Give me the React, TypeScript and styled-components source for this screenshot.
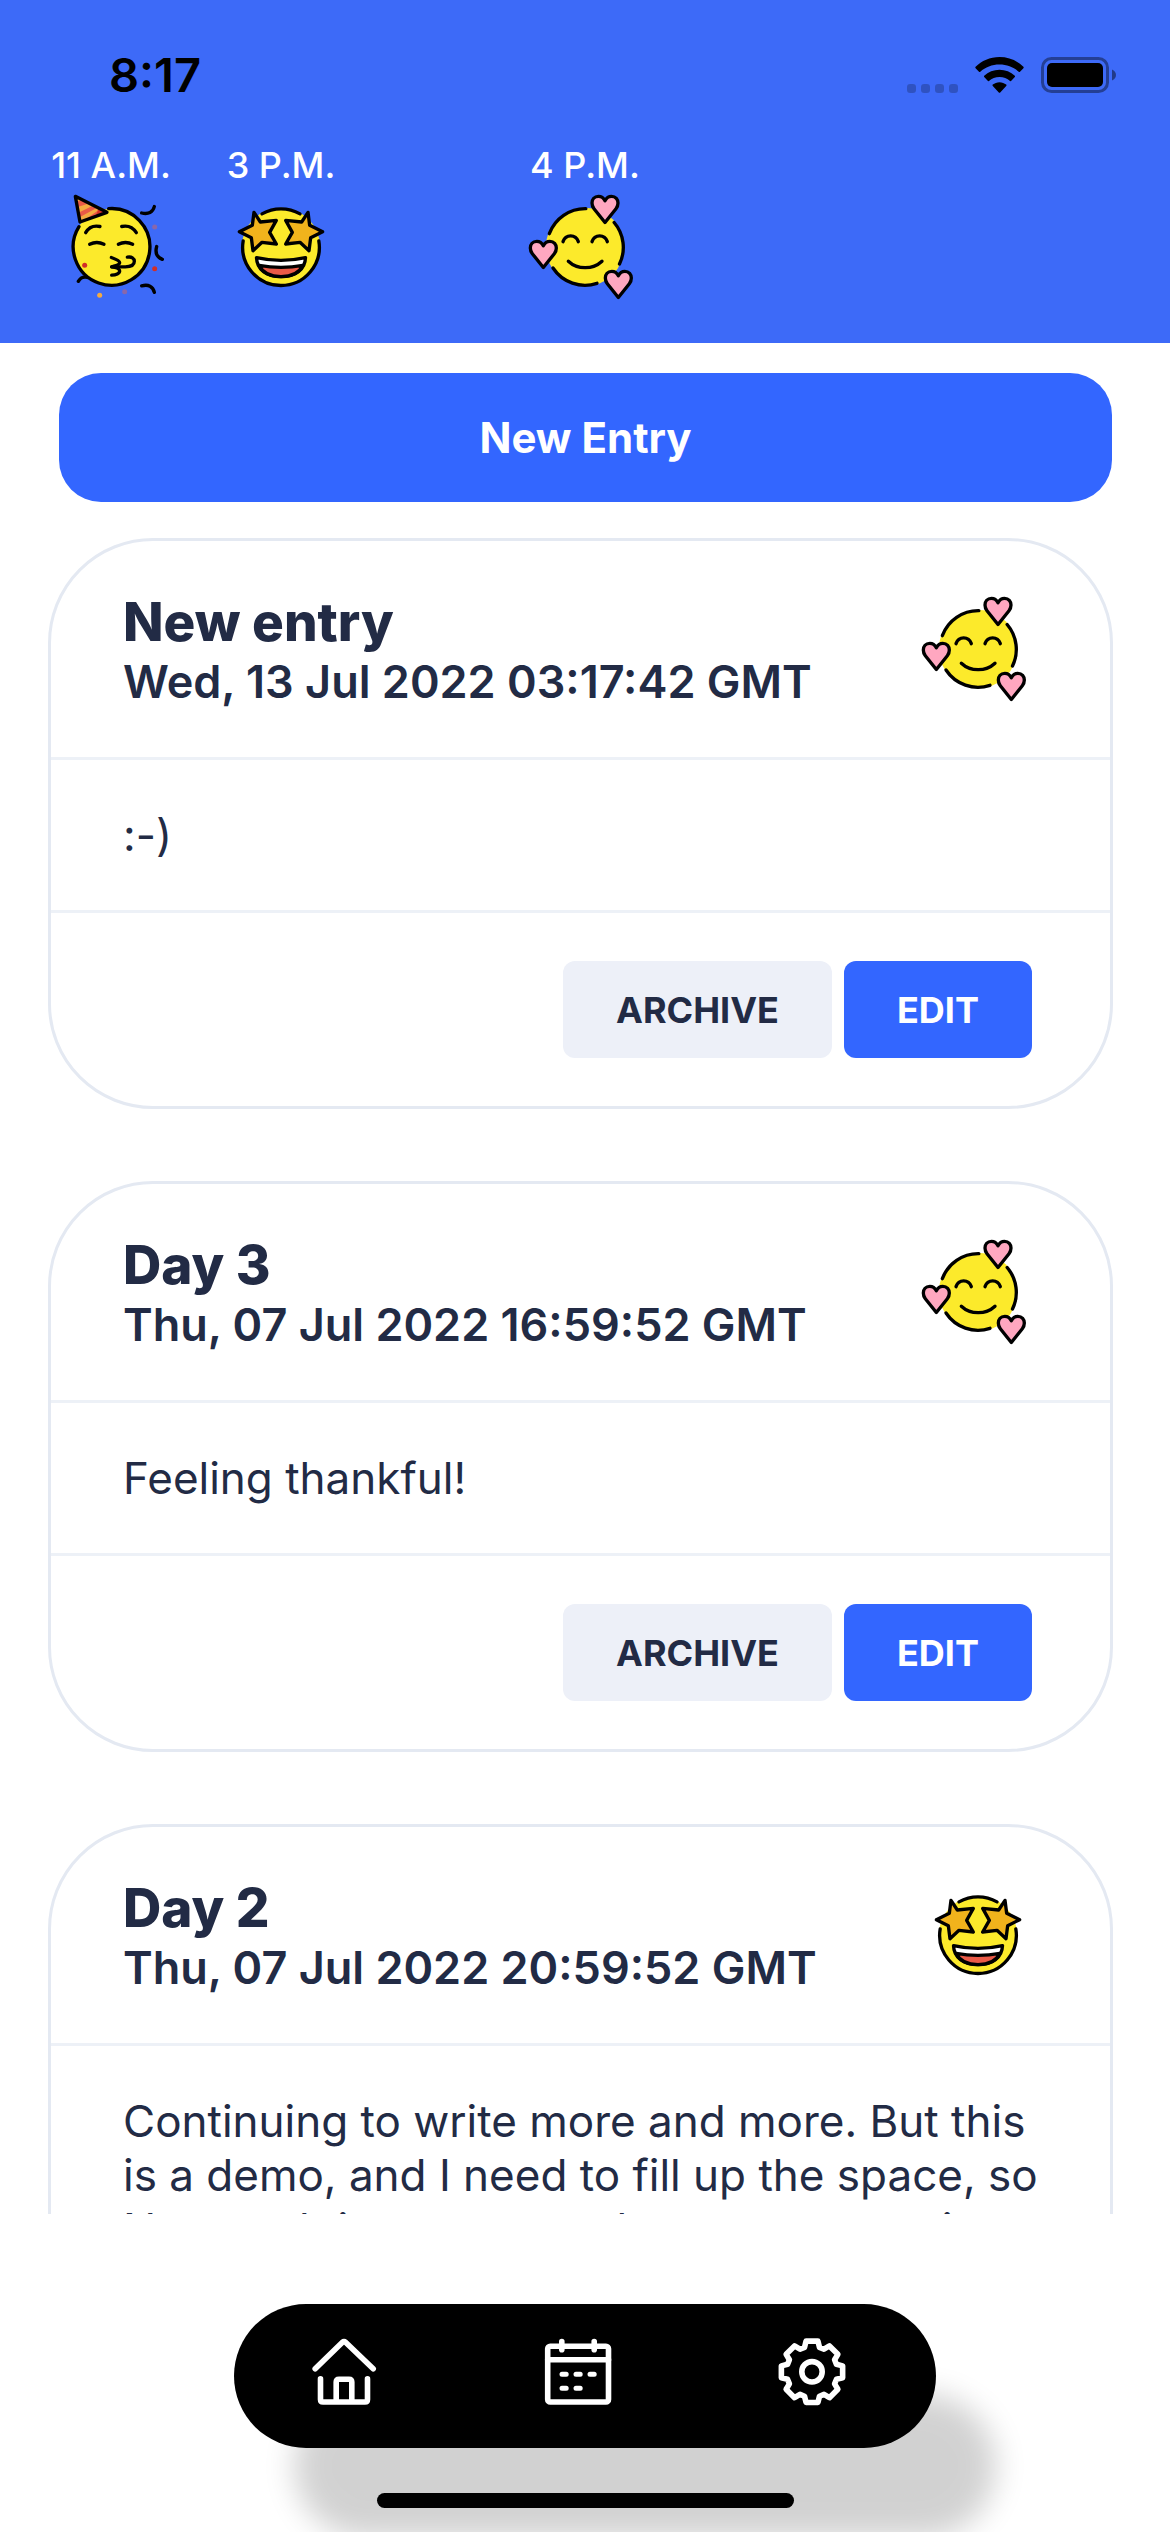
import React from "react";
import styled, { createGlobalStyle } from "styled-components";

const GlobalStyle = createGlobalStyle`
  *, *::before, *::after { box-sizing: border-box; }
  body {
    margin: 0;
    background: #ffffff;
    color: #222b45;
    font-family: Inter, Roboto, "Liberation Sans", sans-serif;
  }
  button { font-family: inherit; border: 0; cursor: pointer; }
  h2, p { margin: 0; }
`;

const Screen = styled.div`
  display: flex;
  flex-direction: column;
  height: 100vh;
  overflow: hidden;
`;

/* ---------- header ---------- */

const Header = styled.header`
  flex: none;
  padding-bottom: 36px;
  background: #3d6af8;
`;

const StatusBar = styled.div`
  display: flex;
  align-items: center;
  justify-content: space-between;
  height: 143px;
  padding: 6px 54px 0 109px;
  color: #000000;
`;

const Clock = styled.time`
  font-size: 47px;
  line-height: 54px;
  font-weight: 600;
`;

const StatusIcons = styled.div`
  display: flex;
  align-items: center;
  gap: 17px;
`;

const Moods = styled.div`
  display: grid;
  grid-template-columns: 1fr auto 1fr;
  padding: 0 50px;
`;

const MoodGroup = styled.div`
  display: flex;
  gap: 48px;
`;

const Mood = styled.div`
  display: flex;
  flex-direction: column;
  align-items: center;
  min-width: 122px;
`;

const MoodTime = styled.span`
  color: #ffffff;
  font-size: 36px;
  line-height: 44px;
  font-weight: 500;
  white-space: nowrap;
`;

/* ---------- journal ---------- */

const Toolbar = styled.div`
  flex: none;
  display: flex;
  padding: 30px 58px 36px 59px;
`;

const NewEntryButton = styled.button`
  flex: 1;
  padding: 36px;
  border-radius: 42px;
  background: #3366ff;
  color: #ffffff;
  font-size: 42px;
  line-height: 57px;
  font-weight: 700;
`;

const Journal = styled.main`
  flex: 1;
  min-height: 0;
  overflow: hidden;
  display: flex;
  flex-direction: column;
  gap: 72px;
  padding: 0 57px 0 48px;
`;

const Card = styled.article`
  flex: none;
  border: 3px solid #e4e9f2;
  border-radius: 105px;
`;

const CardHeader = styled.div`
  display: flex;
  justify-content: space-between;
  padding: 48px 72px;
`;

const CardTitle = styled.h2`
  font-size: 53px;
  line-height: 66px;
  font-weight: 800;
`;

const CardDate = styled.p`
  font-size: 45px;
  line-height: 54px;
  font-weight: 600;
`;

const CardBody = styled.p`
  padding: 48px 72px;
  border: solid #edf1f7;
  border-width: 3px 0;
  font-size: 44px;
  line-height: 54px;
  font-weight: 400;
  font-feature-settings: "calt" 0;
`;

const CardFooter = styled.div`
  display: flex;
  justify-content: flex-end;
  gap: 12px;
  padding: 48px 78px;
`;

const ActionButton = styled.button<{ $primary?: boolean }>`
  padding: 25px 53px 23px;
  border-radius: 12px;
  background: ${(p) => (p.$primary ? "#3366ff" : "#edf0f8")};
  color: ${(p) => (p.$primary ? "#ffffff" : "#222b45")};
  font-size: 36px;
  line-height: 49px;
  font-weight: 700;
`;

/* ---------- bottom navigation ---------- */

const Footer = styled.footer`
  flex: none;
  display: flex;
  flex-direction: column;
  align-items: center;
  gap: 45px;
  padding: 90px 0 24px;
`;

const TabBar = styled.nav`
  display: flex;
  width: 60%;
  height: 144px;
  border-radius: 72px;
  background: #000000;
  box-shadow: 60px 90px 30px rgba(0, 0, 0, 0.18);
`;

const Tab = styled.button`
  flex: 1;
  display: flex;
  align-items: center;
  justify-content: center;
  padding: 0 15px 8px 0;
  background: none;
`;

const HomeIndicator = styled.div`
  position: relative;
  width: 417px;
  height: 15px;
  border-radius: 8px;
  background: #000000;
`;

/* ---------- emoji ---------- */

const EmojiSvg = styled.svg`
  flex: none;
  display: block;
  width: 120px;
  height: 120px;
  fill: none;
  stroke: #000000;
  stroke-width: 2;
  stroke-linecap: round;
  stroke-linejoin: round;
`;

const HEART =
  "M48 8.2C47 6.3 45.6 5.6 44.1 5.6C41.6 5.6 40.2 7.5 40.2 9.6C40.2 11 40.6 12 41.4 13L48 21.3L54.6 13C55.4 12 55.8 11 55.8 9.6C55.8 7.5 54.4 5.6 51.9 5.6C50.4 5.6 49 6.3 48 8.2Z";

const Loved = () => (
  <EmojiSvg viewBox="0 0 72 72" role="img" aria-label="Loved">
    <circle cx="36" cy="36" r="23.5" fill="#fcea2b" stroke="none" />
    <path d="M36.5 13A23 23 0 0 0 14.6 28" />
    <path d="M53.5 21.3A23 23 0 0 1 56.7 46.2" />
    <path d="M16.8 48.6A23 23 0 0 0 43.2 57.8" />
    <path d="M22.8 32.8C24.4 28.2 30.4 28.2 32 32.8M40.2 32.8C41.8 28.2 47.8 28.2 49.4 32.8" />
    <path d="M26 44.5C31.5 49.7 40.7 49.7 46.2 44.5" />
    <path fill="#ffa7c0" d={HEART} />
    <path fill="#ffa7c0" d={HEART} transform="translate(-37 27)" />
    <path fill="#ffa7c0" d={HEART} transform="translate(8 45)" />
  </EmojiSvg>
);

const STAR =
  "M19.8 15.2L23.6 21L33.2 20L29.2 27.2L33.2 34.2L24.6 33.2L19.2 38.2L18.2 30.4L11 26.8L18.8 23Z";

const StarStruck = () => (
  <EmojiSvg viewBox="0 0 72 72" role="img" aria-label="Star-struck">
    <circle cx="36" cy="36" r="23.5" fill="#fcea2b" stroke="none" />
    <path d="M24.6 16.1A23 23 0 0 1 47.4 16.1" />
    <path d="M13.3 32.4A23 23 0 1 0 58.7 32.4" />
    <path fill="#f1b31c" d={STAR} />
    <path fill="#f1b31c" d={STAR} transform="translate(72 0) scale(-1 1)" />
    <path
      fill="#ffffff"
      d="M21.3 42.4C31 44.6 41 44.6 50.7 42.4C50.5 49.5 44.6 53.8 36 53.8C27.4 53.8 21.5 49.5 21.3 42.4Z"
    />
    <path
      fill="#ea5a47"
      d="M22.8 47C31.5 48.6 40.5 48.6 49.2 47C47 51.5 42.5 53.8 36 53.8C29.5 53.8 25 51.5 22.8 47Z"
    />
  </EmojiSvg>
);

const Party = () => (
  <EmojiSvg viewBox="0 0 72 72" role="img" aria-label="Celebrating">
    <circle cx="36" cy="36" r="23" fill="#fcea2b" stroke="none" />
    <path d="M34.6 13A23 23 0 1 1 16.8 23.8" />
    <path fill="#f4aa41" stroke="none" d="M14.6 5.6L33.6 15.2L17.4 21Z" />
    <g stroke="none" fill="#ea5a47">
      <path d="M15.1 9L18.8 7.7L23 9.8L15.6 12.2Z" />
      <path d="M16.2 15.6L24.4 11.6L27.4 12.6L16.6 18.4Z" />
      <path d="M20 20L29.4 13.2L33.6 15.2L24.6 18.4Z" />
    </g>
    <path stroke="none" fill="#d22f27" d="M26.4 17.6C27.6 16 28.2 14.4 28.2 12.6L33.6 15.2Z" />
    <path d="M14.6 5.6L33.6 15.2L17.4 21Z" />
    <path d="M20.8 27.4C22.6 24.2 25.6 22.9 29.4 23.7M42.4 23.7C46.2 22.9 49.2 24.2 51.2 27.4" />
    <path d="M23.2 34.4C26 33 29 33 31.8 34.4M40.4 34.4C43.2 33 46.2 33 49 34.4" />
    <path d="M36.2 42.3C38.8 43.2 41.2 44.2 41.2 45.4C41.2 46.7 38.4 47.2 36.4 47.9C39.4 48.2 41.2 49.2 41.2 50.4C41.2 51.8 39 52.8 36.4 52.9" />
    <path d="M36.4 47.9H44.6C48 47.9 50 46.6 50 44.6C50 42.8 48.4 41.6 45.8 42.1" />
    <path d="M54.4 15.6C58.4 16.6 61.2 15.2 62 11.7M63.4 35.7C62.4 39.4 63.6 42.2 66.8 43.4M54.4 59.3C58.4 58.2 61.2 59.6 62 63.2M16.4 56.6C17.6 54.4 19.4 53.6 22 54.3" />
    <g stroke="none">
      <circle cx="62.2" cy="24" r="1.5" fill="#8967aa" />
      <circle cx="44.2" cy="62.8" r="1.5" fill="#8967aa" />
      <circle cx="62.2" cy="49" r="1.5" fill="#d22f27" />
      <circle cx="20.2" cy="47" r="1.5" fill="#d22f27" />
      <circle cx="29.2" cy="65" r="1.5" fill="#f4aa41" />
    </g>
  </EmojiSvg>
);

/* ---------- status icons ---------- */

const Cellular = () => (
  <svg width="51" height="36" viewBox="0 0 51 36" fill="#000000" fillOpacity="0.22" aria-hidden="true">
    {[0, 14, 28, 42].map((x) => (
      <rect key={x} x={x} y="27" width="9" height="9" rx="3" />
    ))}
  </svg>
);

const Wifi = () => (
  <svg width="49" height="36" viewBox="0 0 49 36" fill="#000000" aria-hidden="true">
    <path d="M24.5 0C15 0 6.500 3.800 0.600 9.800Q0 10.500 0.600 11.200L4 14.800Q4.600 15.400 5.300 14.800C10.400 10.200 17 7.600 24.500 7.600S38.600 10.200 43.700 14.800Q44.400 15.400 45 14.800L48.400 11.200Q49 10.500 48.400 9.800C42.500 3.800 34 0 24.500 0Z" />
    <path d="M24.500 12.800C18.600 12.800 13.200 15 9.200 18.800Q8.600 19.400 9.200 20.100L12.700 23.800Q13.300 24.400 14 23.900C16.800 21.500 20.400 20 24.500 20S32.200 21.500 35 23.900Q35.700 24.400 36.300 23.800L39.800 20.100Q40.400 19.400 39.800 18.800C35.800 15 30.400 12.800 24.500 12.800Z" />
    <path d="M24.500 25.200C21.900 25.200 19.600 26.100 17.800 27.600Q17.100 28.200 17.800 28.900L23.800 35.400Q24.500 36.100 25.200 35.400L31.200 28.900Q31.900 28.200 31.200 27.600C29.400 26.100 27.100 25.200 24.500 25.200Z" />
  </svg>
);

const Battery = () => (
  <svg width="75" height="36" viewBox="0 0 75 36" aria-hidden="true">
    <rect x="1.500" y="1.500" width="65" height="33" rx="9" fill="none" stroke="#000000" strokeOpacity="0.4" strokeWidth="3" />
    <rect x="6" y="6" width="56" height="24" rx="5" fill="#000000" />
    <path d="M71 12.500C73.500 13.500 75 15.500 75 18S73.500 22.500 71 23.500Z" fill="#000000" fillOpacity="0.45" />
  </svg>
);

/* ---------- navigation icons ---------- */

const NavSvg = styled.svg`
  width: 72px;
  height: 72px;
  fill: none;
  stroke: #ffffff;
  stroke-width: 5.6;
  stroke-linecap: round;
  stroke-linejoin: round;
`;

const HomeIcon = () => (
  <NavSvg viewBox="0 0 72 72" aria-hidden="true">
    <path d="M7.200 32.700L34.200 6.400Q36 5 37.800 6.400L65.200 32.700" />
    <path d="M12.500 42.900V63.500Q12.500 66 15 66H57Q59.500 66 59.500 63.500V42.900" />
    <path d="M28.200 65V46Q28.200 43.200 31 43.200H41Q43.800 43.200 43.800 46V65" />
  </NavSvg>
);

const CalendarIcon = () => (
  <NavSvg viewBox="0 0 72 72" aria-hidden="true">
    <rect x="5.700" y="10.300" width="60.800" height="55.700" rx="2.500" />
    <path d="M5.700 23.700H66.500M19.800 5.600V13.700M52.200 5.600V13.700" />
    <path strokeWidth="5" d="M20 38.300H24.200M34 38.300H38.200M48 38.300H52.200M20 52.300H24.200M34 52.300H38.200" />
  </NavSvg>
);

const polar = (radius: number, degrees: number) => {
  const a = (degrees * Math.PI) / 180;
  return `${(36 + radius * Math.sin(a)).toFixed(2)} ${(35.8 - radius * Math.cos(a)).toFixed(2)}`;
};

const GEAR =
  "M" +
  Array.from({ length: 8 }, (_, i) => i * 45)
    .map((d) => [polar(25.6, d - 17), polar(31.2, d - 11), polar(31.2, d + 11), polar(25.6, d + 17)].join("L"))
    .join("L") +
  "Z";

const GearIcon = () => (
  <NavSvg viewBox="0 0 72 72" aria-hidden="true">
    <path d={GEAR} />
    <circle cx="36" cy="35.800" r="10.200" />
  </NavSvg>
);

/* ---------- data ---------- */

const entries = [
  { title: "New entry", date: "Wed, 13 Jul 2022 03:17:42 GMT", text: ":-)", Emoji: Loved },
  { title: "Day 3", date: "Thu, 07 Jul 2022 16:59:52 GMT", text: "Feeling thankful!", Emoji: Loved },
  {
    title: "Day 2",
    date: "Thu, 07 Jul 2022 20:59:52 GMT",
    text: "Continuing to write more and more. But this is a demo, and I need to fill up the space, so Not much is new as we have more running on.",
    Emoji: StarStruck,
  },
];

export default function App() {
  return (
    <Screen>
      <GlobalStyle />
      <Header>
        <StatusBar>
          <Clock>8:17</Clock>
          <StatusIcons>
            <Cellular />
            <Wifi />
            <Battery />
          </StatusIcons>
        </StatusBar>
        <Moods>
          <MoodGroup>
            <Mood>
              <MoodTime>11 A.M.</MoodTime>
              <Party />
            </Mood>
            <Mood>
              <MoodTime>3 P.M.</MoodTime>
              <StarStruck />
            </Mood>
          </MoodGroup>
          <Mood>
            <MoodTime>4 P.M.</MoodTime>
            <Loved />
          </Mood>
        </Moods>
      </Header>
      <Toolbar>
        <NewEntryButton type="button">New Entry</NewEntryButton>
      </Toolbar>
      <Journal>
        {entries.map(({ title, date, text, Emoji }) => (
          <Card key={title}>
            <CardHeader>
              <div>
                <CardTitle>{title}</CardTitle>
                <CardDate>{date}</CardDate>
              </div>
              <Emoji />
            </CardHeader>
            <CardBody>{text}</CardBody>
            <CardFooter>
              <ActionButton type="button">ARCHIVE</ActionButton>
              <ActionButton type="button" $primary>
                EDIT
              </ActionButton>
            </CardFooter>
          </Card>
        ))}
      </Journal>
      <Footer>
        <TabBar aria-label="Main">
          <Tab type="button" aria-label="Home">
            <HomeIcon />
          </Tab>
          <Tab type="button" aria-label="Calendar">
            <CalendarIcon />
          </Tab>
          <Tab type="button" aria-label="Settings">
            <GearIcon />
          </Tab>
        </TabBar>
        <HomeIndicator />
      </Footer>
    </Screen>
  );
}
